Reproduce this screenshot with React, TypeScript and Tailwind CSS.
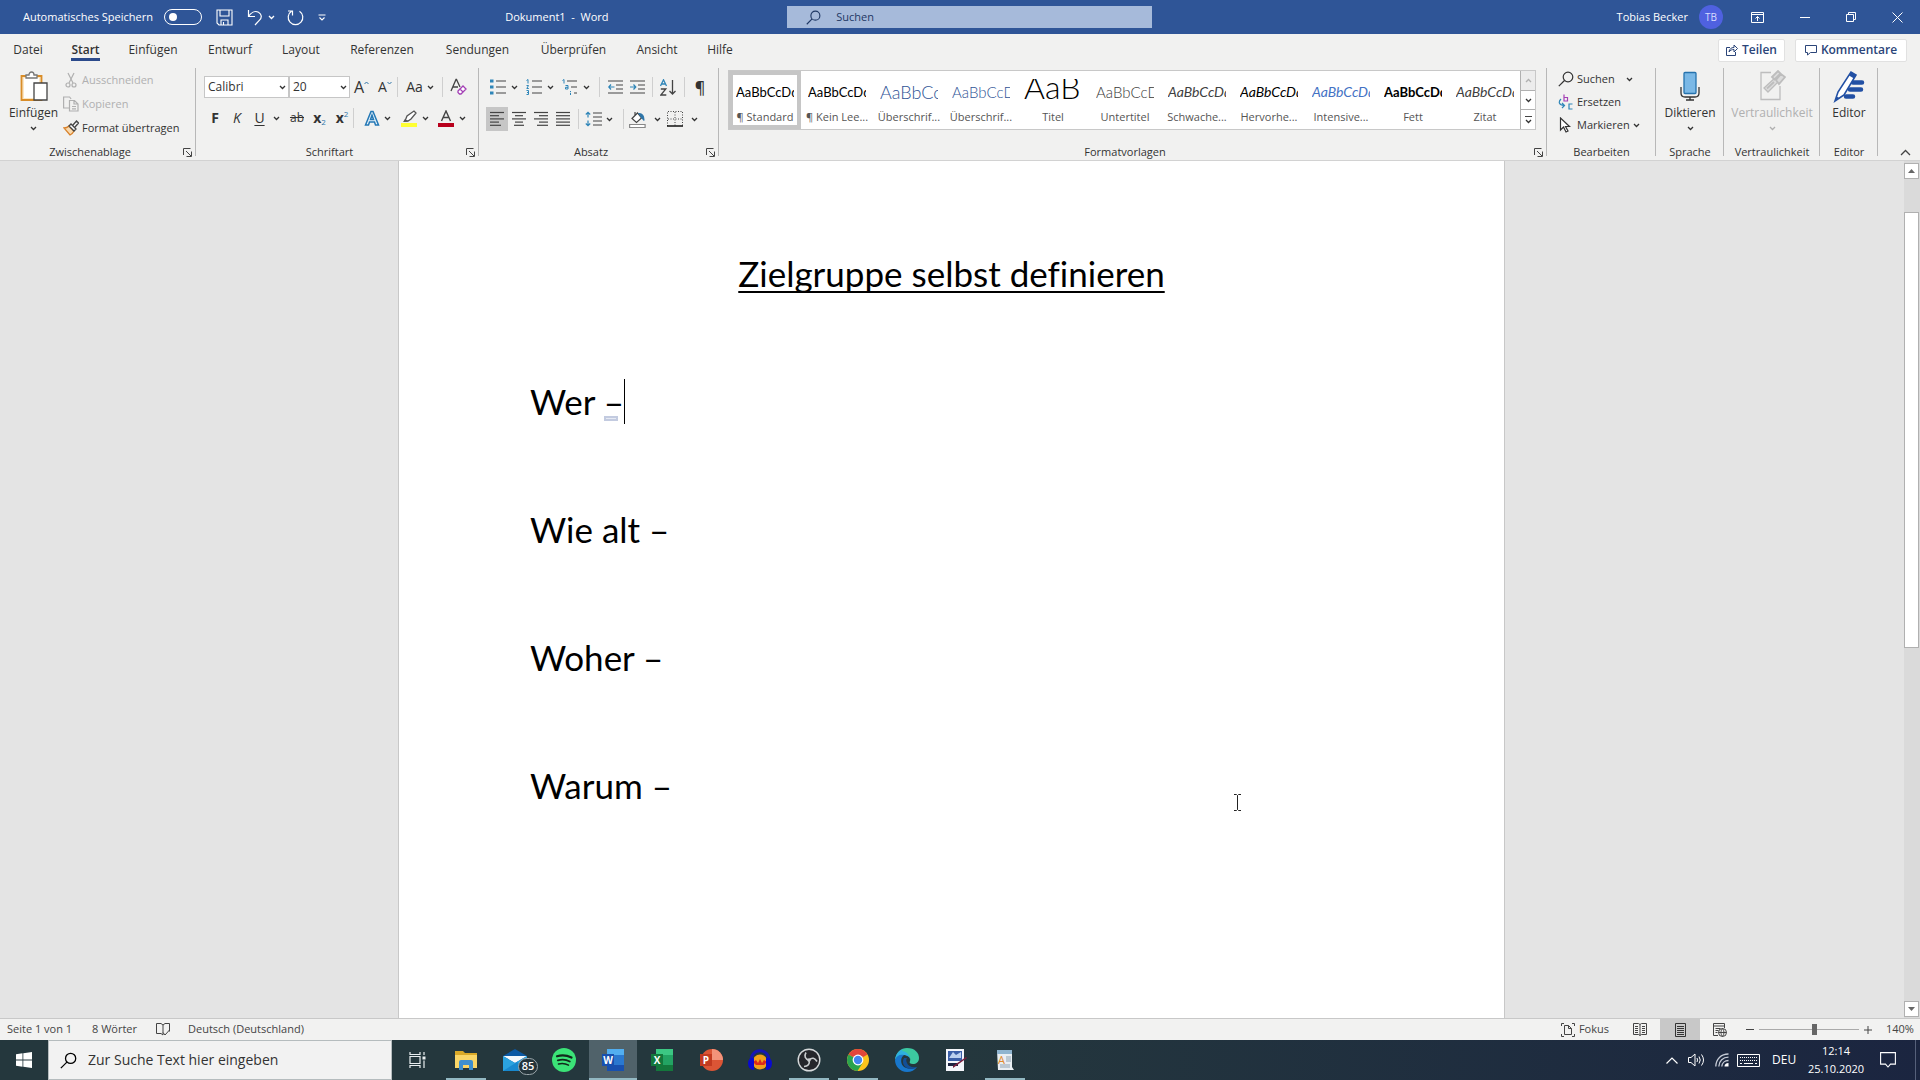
import { useState } from "react";
import type { ReactNode } from "react";
import clsx from "clsx";

interface StyleItem {
  name: string;
  sample: string;
  className: string;
}

const TABS = [
  { label: "Datei", width: "w-14" },
  { label: "Start", width: "w-[59px]" },
  { label: "Einfügen", width: "w-[76px]" },
  { label: "Entwurf", width: "w-[78px]" },
  { label: "Layout", width: "w-[64px]" },
  { label: "Referenzen", width: "w-[98px]" },
  { label: "Sendungen", width: "w-[93px]" },
  { label: "Überprüfen", width: "w-[99px]" },
  { label: "Ansicht", width: "w-[68px]" },
  { label: "Hilfe", width: "w-[58px]" },
];

const STYLES: StyleItem[] = [
  { name: "¶ Standard", sample: "AaBbCcDd", className: "text-[13px]/[26px] text-black" },
  { name: "¶ Kein Lee...", sample: "AaBbCcDd", className: "text-[13px]/[26px] text-black" },
  { name: "Überschrif...", sample: "AaBbCc", className: "text-[18px]/[26px] font-light text-[#2f5496]" },
  { name: "Überschrif...", sample: "AaBbCcD", className: "text-[15px]/[26px] font-light text-[#2f5496]" },
  { name: "Titel", sample: "AaB", className: "text-[32px]/4 font-light text-black" },
  { name: "Untertitel", sample: "AaBbCcD", className: "text-[15px]/[26px] font-light text-[#3a3a3a]" },
  { name: "Schwache...", sample: "AaBbCcDd", className: "text-[14px]/[26px] italic text-[#404040]" },
  { name: "Hervorhe...", sample: "AaBbCcDd", className: "text-[14px]/[26px] italic text-black" },
  { name: "Intensive...", sample: "AaBbCcDd", className: "text-[14px]/[26px] italic text-[#4472c4]" },
  { name: "Fett", sample: "AaBbCcDd", className: "text-[13px]/[26px] font-bold text-black" },
  { name: "Zitat", sample: "AaBbCcDd", className: "text-[14px]/[26px] italic text-[#404040]" },
];

const Chevron = ({ className = "" }: { className?: string }) => (
  <svg width="7" height="5" viewBox="0 0 7 5" fill="none" stroke="currentColor" strokeWidth="1.3" className={clsx("shrink-0", className)}>
    <path d="M1 1l2.5 2.5L6 1" />
  </svg>
);

const Divider = () => <span className="h-5 w-px shrink-0 bg-[#cfcfcf]" />;

const Tool = ({ label, width, children, active }: { label: string; width: string; children: ReactNode; active?: boolean }) => (
  <button
    aria-label={label}
    className={clsx("flex h-6 shrink-0 items-center justify-center", width, active && "bg-[#c6c6c6]")}>
    {children}
  </button>
);

const Launcher = ({ label }: { label: string }) => (
  <button aria-label={label} className="absolute right-1 bottom-[3px]">
    <svg width="9" height="9" viewBox="0 0 9 9" fill="none" stroke="#444" strokeWidth="1">
      <path d="M.5 7V.5H7.5M3 3l5 5M8.5 3.5v5h-5" />
    </svg>
  </button>
);

const Group = ({ title, className, launcher, children }: { title: string; className: string; launcher?: boolean; children: ReactNode }) => (
  <section className={clsx("relative flex h-[94px] shrink-0 flex-col", className)}>
    <div className="flex-1">{children}</div>
    <h2 className={clsx("h-4 text-center text-[11px] leading-4", launcher && "pr-4")}>{title}</h2>
    {launcher && <Launcher label={`${title} Optionen`} />}
    <span className="absolute top-[2px] right-0 h-[88px] w-px bg-[#b8b8b8]" />
  </section>
);

const BigButton = ({ label, chevron, disabled, children }: { label: string; chevron?: boolean; disabled?: boolean; children: ReactNode }) => (
  <button disabled={disabled} className={clsx("flex flex-col items-center pt-1", disabled && "text-[#b0b0b0]")}>
    {children}
    <span className="mt-[2px] text-xs leading-4">{label}</span>
    {chevron && <Chevron className="mt-[5px]" />}
  </button>
);

const Lines = ({ rows }: { rows: number[][] }) => (
  <svg width="16" height="16" viewBox="0 0 16 16" stroke="#444" strokeWidth="1.2">
    {rows.map(([x1, x2], i) => (
      <path key={i} d={`M${x1} ${1.5 + i * 3.2}H${x2}`} />
    ))}
  </svg>
);

const Magnifier = ({ size, className }: { size: number; className?: string }) => (
  <svg width={size} height={size} viewBox="0 0 16 16" fill="none" stroke="currentColor" strokeWidth="1.2" className={className}>
    <circle cx="10" cy="6" r="4.8" />
    <path d="M6.5 9.5L.8 15.2" />
  </svg>
);

const TitleBar = () => {
  const [autoSave, setAutoSave] = useState(false);

  return (
    <header className="grid h-[34px] shrink-0 grid-cols-[41fr_19fr_40fr] items-center bg-[#2f5597] text-[11px] text-white">
      <div className="flex items-center pl-[23px]">
        <label className="flex items-center gap-2">
          <span className="w-[133px] whitespace-nowrap">Automatisches Speichern</span>
          <input
            type="checkbox"
            role="switch"
            checked={autoSave}
            onChange={(e) => setAutoSave(e.target.checked)}
            className="h-4 w-[38px] appearance-none rounded-full border border-white before:ml-1 before:mt-[3px] before:block before:size-2 before:rounded-full before:bg-white checked:before:ml-6"
          />
        </label>
        <button aria-label="Speichern" className="ml-[14px]">
          <svg width="17" height="17" viewBox="0 0 17 17" fill="none" stroke="white" strokeWidth="1.1">
            <path d="M1 1h15v15H3L1 14zM4 1v6h9V1M5 16v-5h7v5M7.5 13v3" />
          </svg>
        </button>
        <button aria-label="Rückgängig" className="ml-[14px]">
          <svg width="16" height="17" viewBox="0 0 16 17" fill="none" stroke="white" strokeWidth="1.2">
            <path d="M1.5 1v6.5H8M1.5 7.5C4 3.500 8 1.500 11.500 3.200c3.500 2 3.500 5.500 1 8L8 16" />
          </svg>
        </button>
        <Chevron className="ml-[5px]" />
        <button aria-label="Wiederholen" className="ml-3">
          <svg width="17" height="18" viewBox="0 0 17 18" fill="none" stroke="white" strokeWidth="1.2">
            <path d="M4.500 3.200a7.300 7.300 0 1 0 8 0M1 3h4.500v4.500" transform="matrix(1 0 0 1 0 0)" />
          </svg>
        </button>
        <button aria-label="Symbolleiste anpassen" className="ml-[14px]">
          <svg width="8" height="7" viewBox="0 0 8 7" fill="none" stroke="white" strokeWidth="1.1">
            <path d="M.5 1h7M1.500 3.500L4 6l2.500-2.500" />
          </svg>
        </button>
        <h1 className="ml-auto w-[282px] whitespace-pre">Dokument1  -  Word</h1>
      </div>
      <label className="flex h-[22px] items-center bg-[#a6bada] text-[#1f3864]">
        <Magnifier size={15} className="ml-[19px] shrink-0" />
        <input
          aria-label="Suchen"
          placeholder="Suchen"
          className="ml-[15px] min-w-0 flex-1 bg-transparent outline-none placeholder:text-[#1f3864]"
        />
      </label>
      <div className="flex items-center justify-end pr-[17px]">
        <span>Tobias Becker</span>
        <span className="ml-[11px] flex size-6 items-center justify-center rounded-full bg-[#4f61e0] text-[10px] text-[#d8dcff]">TB</span>
        <button aria-label="Menüband-Anzeigeoptionen" className="ml-7">
          <svg width="13" height="11" viewBox="0 0 13 11" fill="none" stroke="white">
            <path d="M.5.5h12v10H.5zM.5 2.500h12M6.500 9V4.500M4.500 6.500l2-2 2 2" />
          </svg>
        </button>
        <button aria-label="Minimieren" className="ml-9">
          <svg width="10" height="10" viewBox="0 0 10 10" stroke="white">
            <path d="M0 5.500h10" />
          </svg>
        </button>
        <button aria-label="Verkleinern" className="ml-9">
          <svg width="10" height="10" viewBox="0 0 10 10" fill="none" stroke="white">
            <path d="M.5 2.500h7v7h-7zM2.500 2.500v-2h7v7h-2" />
          </svg>
        </button>
        <button aria-label="Schließen" className="ml-9">
          <svg width="11" height="11" viewBox="0 0 11 11" stroke="white">
            <path d="M.5.5l10 10M10.500.5l-10 10" />
          </svg>
        </button>
      </div>
    </header>
  );
};

const TabRow = () => (
  <nav className="flex h-8 shrink-0 items-center bg-[#f1f1f0] text-xs">
    {TABS.map(({ label, width }) => (
      <button key={label} className={clsx("flex shrink-0 justify-center whitespace-nowrap", width)}>
        {label === "Start" ? (
          <span className="border-b-[3px] border-[#2b4a8b] pt-[3px] font-semibold">{label}</span>
        ) : (
          <span>{label}</span>
        )}
      </button>
    ))}
    <div className="ml-auto flex gap-[10px] pr-[13px] font-semibold text-[#2b4579]">
      <button className="flex h-[23px] w-[67px] items-center justify-center gap-1 rounded-xs border border-[#e1e1e1] bg-white">
        <svg width="12" height="12" viewBox="0 0 12 12" fill="none" stroke="currentColor">
          <path d="M4 3.500H.5v8h9V8M3 8c.5-3 2-4.500 5-4.500V1l3.500 3.500L8 8V5.500C6 5.500 4.500 6 3 8z" />
        </svg>
        Teilen
      </button>
      <button className="flex h-[23px] w-28 items-center justify-center gap-1 rounded-xs border border-[#e1e1e1] bg-white">
        <svg width="12" height="11" viewBox="0 0 12 11" fill="none" stroke="currentColor">
          <path d="M.5.5h11v7h-6l-3 2.500V7.500h-2z" />
        </svg>
        Kommentare
      </button>
    </div>
  </nav>
);

const ClipboardGroup = () => (
  <Group title="Zwischenablage" className="w-[196px]" launcher>
    <div className="flex">
      <div className="flex w-[63px] justify-center pl-1">
        <BigButton label="Einfügen" chevron>
          <svg width="30" height="33" viewBox="0 0 30 33" fill="none">
            <path d="M3.500 6h20v24h-20z" fill="#fbe7c6" stroke="#d98d28" strokeWidth="1.800" />
            <path d="M6 8h15v20H6z" fill="#fff" />
            <path d="M8 8V5h3c0-4 5-4 5 0h3v3z" fill="#fff" stroke="#777" strokeWidth="1.300" />
            <path d="M16 13h13v17H16z" fill="#fff" stroke="#444" strokeWidth="1.300" />
          </svg>
        </BigButton>
      </div>
      <div className="flex flex-col gap-1 pt-1 text-[11px]">
        <button disabled className="flex h-5 items-center gap-[3px] text-[#b0b0b0]">
          <svg width="16" height="16" viewBox="0 0 16 16" fill="none" stroke="currentColor" strokeWidth="1.200">
            <path d="M5 1l5 10M11 1L6 11" />
            <circle cx="5" cy="13" r="2" />
            <circle cx="11" cy="13" r="2" />
          </svg>
          Ausschneiden
        </button>
        <button disabled className="flex h-5 items-center gap-[3px] text-[#b0b0b0]">
          <svg width="16" height="16" viewBox="0 0 16 16" fill="none" stroke="currentColor" strokeWidth="1.200">
            <path d="M6 12H.6V1h6l1.500 2M6.500 4.500h5l3.500 3.500v7H6.500zM11 4.500V8h4M9 10.500h4M9 12.800h4" />
          </svg>
          Kopieren
        </button>
        <button className="flex h-5 items-center gap-[3px]">
          <svg width="16" height="16" viewBox="0 0 16 16" fill="none">
            <path d="M1 8c3 0 4-1 5-2l5 5c-1 2-2 3-4 4z" fill="#f8d9ae" stroke="#d9822b" strokeWidth="1.300" />
            <path d="M6 6l2-2 5 5-2 2zM10 5l3.500-4 2 2L12 7" fill="#fff" stroke="#444" strokeWidth="1.300" />
          </svg>
          Format übertragen
        </button>
      </div>
    </div>
  </Group>
);

const FontGroup = () => (
  <Group title="Schriftart" className="w-[283px]" launcher>
    <div className="flex flex-col gap-2 pl-2 pt-[10px]">
      <div className="flex h-[22px] items-center text-xs">
        <div className="relative">
          <select aria-label="Schriftart" className="h-[22px] w-[85px] appearance-none border border-[#c6c6c6] bg-white px-[3px]">
            <option>Calibri</option>
          </select>
          <Chevron className="pointer-events-none absolute top-[9px] right-[3px]" />
        </div>
        <div className="relative">
          <select aria-label="Schriftgrad" className="h-[22px] w-[61px] appearance-none border border-[#c6c6c6] bg-white px-[3px]">
            <option>20</option>
          </select>
          <Chevron className="pointer-events-none absolute top-[9px] right-[3px]" />
        </div>
        <Tool label="Schriftgrad vergrößern" width="w-[23px]">
          <span className="text-base leading-5">A</span>
          <svg width="5" height="4" viewBox="0 0 5 4" fill="none" stroke="#2e75a8" className="mb-2">
            <path d="M.5 3L2.500 1l2 2" />
          </svg>
        </Tool>
        <Tool label="Schriftgrad verkleinern" width="w-6">
          <span className="text-sm leading-5">A</span>
          <svg width="5" height="4" viewBox="0 0 5 4" fill="none" stroke="#2e75a8" className="mb-2">
            <path d="M.5 1l2 2 2-2" />
          </svg>
        </Tool>
        <Divider />
        <Tool label="Groß-/Kleinschreibung" width="w-[44px]">
          <span className="mr-1 text-sm">Aa</span>
          <Chevron />
        </Tool>
        <Divider />
        <Tool label="Formatierung löschen" width="w-[30px]">
          <svg width="17" height="18" viewBox="0 0 17 18" fill="none">
            <path d="M1 13L6 1.500h.5L10 9M3 9h5" stroke="#444" strokeWidth="1.300" />
            <path d="M8 13l5-5 3 3-5 5H9.500L8 14.500zM10 11l3 3" fill="#fff" stroke="#a33fb5" strokeWidth="1.300" />
          </svg>
        </Tool>
      </div>
      <div className="flex h-6 items-center text-sm">
        <Tool label="Fett" width="w-[22px]"><b>F</b></Tool>
        <Tool label="Kursiv" width="w-[22px]"><i>K</i></Tool>
        <Tool label="Unterstrichen" width="w-[38px]">
          <u className="mr-2 underline-offset-2">U</u>
          <Chevron />
        </Tool>
        <Tool label="Durchgestrichen" width="w-[22px]"><s className="text-xs">ab</s></Tool>
        <Tool label="Tiefgestellt" width="w-[23px]">
          <b>x</b><span className="mt-2 text-[8px] text-[#2e75a8]">2</span>
        </Tool>
        <Tool label="Hochgestellt" width="w-[22px]">
          <b>x</b><span className="mb-2 text-[8px] text-[#2e75a8]">2</span>
        </Tool>
        <Divider />
        <span className="w-1" />
        <Tool label="Texteffekte" width="w-[38px]">
          <svg width="16" height="16" viewBox="0 0 16 16" className="mr-1">
            <path d="M1.500 15L7 1.500h2L14.500 15h-3l-1-3h-5l-1 3zM6.500 9.500h3L8 5z" fill="#e8f3fb" stroke="#2478b5" strokeWidth="1.500" />
          </svg>
          <Chevron />
        </Tool>
        <Tool label="Texthervorhebung" width="w-[38px]">
          <svg width="17" height="17" viewBox="0 0 17 17" fill="none" className="mr-1">
            <path d="M0 13h16v4H0z" fill="#ffff32" />
            <path d="M4 11l2-5 7-5 2 2-5 6-3 2z" fill="#fff" stroke="#555" strokeWidth="1.300" />
            <path d="M2 12l2-3 3 2.500z" fill="#555" />
          </svg>
          <Chevron />
        </Tool>
        <Tool label="Schriftfarbe" width="w-[36px]">
          <svg width="17" height="17" viewBox="0 0 17 17" fill="none" className="mr-1">
            <path d="M0 13h16v4H0z" fill="#b8001c" />
            <path d="M3.500 11L8 1l4.500 10M5 7.500h6" stroke="#444" strokeWidth="1.400" />
          </svg>
          <Chevron />
        </Tool>
      </div>
    </div>
  </Group>
);

const ListIcon = ({ kind }: { kind: "bullet" | "number" | "multi" }) => (
  <svg width="16" height="16" viewBox="0 0 16 16" stroke="#444" strokeWidth="1.200" fill="none">
    {kind === "multi" ? (
      <path d="M5 2h10M9 8h6M12 14h3" />
    ) : (
      <path d="M6 2h10M6 8h10M6 14h10" />
    )}
    {kind === "bullet" && <path d="M0 2h3.500M0 8h3.500M0 14h3.500" stroke="#2e85b8" strokeWidth="3" />}
    {kind === "number" && <path d="M.5 1.500L2 .5v4M.5 6.500h2L.8 9.500h2M.5 11.500h2v4H.5M1 13.500h1.500" stroke="#2e85b8" strokeWidth="1" />}
    {kind === "multi" && <path d="M.5 1.500L2 .5v4M3.500 6.500h2.500v3.500H3.500V8.300H6M8.500 12v1M8.500 13.800V16" stroke="#2e85b8" strokeWidth="1" />}
  </svg>
);

const ParagraphGroup = () => (
  <Group title="Absatz" className="w-[240px]" launcher>
    <div className="flex flex-col gap-2 pl-[7px] pt-[9px]">
      <div className="flex h-6 items-center">
        {(["bullet", "number", "multi"] as const).map((kind) => (
          <Tool key={kind} label={kind === "bullet" ? "Aufzählung" : kind === "number" ? "Nummerierung" : "Liste"} width="w-9">
            <ListIcon kind={kind} />
            <Chevron className="ml-[5px]" />
          </Tool>
        ))}
        <span className="w-[5px]" />
        <Divider />
        <span className="w-1" />
        <Tool label="Einzug verkleinern" width="w-[22px]">
          <svg width="15" height="14" viewBox="0 0 15 14" fill="none" stroke="#444" strokeWidth="1.200">
            <path d="M0 1h15M8 5h7M8 9h7M0 13h15" />
            <path d="M6.500 7H1M3 4.500L.8 7 3 9.500" stroke="#2e85b8" />
          </svg>
        </Tool>
        <Tool label="Einzug vergrößern" width="w-[22px]">
          <svg width="15" height="14" viewBox="0 0 15 14" fill="none" stroke="#444" strokeWidth="1.200">
            <path d="M0 1h15M8 5h7M8 9h7M0 13h15" />
            <path d="M0 7h5.500M3.500 4.500L5.800 7 3.500 9.500" stroke="#2e85b8" />
          </svg>
        </Tool>
        <span className="w-1" />
        <Divider />
        <Tool label="Sortieren" width="w-[31px]">
          <svg width="17" height="17" viewBox="0 0 17 17" fill="none" strokeWidth="1.300">
            <path d="M.5 7L3.500.8 6.500 7M1.500 5h4" stroke="#2e85b8" />
            <path d="M.8 10h5L.8 16h5.500M12.500 1v14M9.500 12l3 3 3-3" stroke="#444" />
          </svg>
        </Tool>
        <Divider />
        <Tool label="Absatzmarken anzeigen" width="w-[30px]">
          <span className="text-base font-semibold">¶</span>
        </Tool>
      </div>
      <div className="flex h-6 items-center">
        <Tool label="Linksbündig" width="w-[22px]" active>
          <Lines rows={[[1, 15], [1, 10], [1, 15], [1, 10], [1, 12]]} />
        </Tool>
        <Tool label="Zentriert" width="w-[22px]">
          <Lines rows={[[1, 15], [4, 12], [1, 15], [4, 12], [3, 13]]} />
        </Tool>
        <Tool label="Rechtsbündig" width="w-[22px]">
          <Lines rows={[[1, 15], [6, 15], [1, 15], [6, 15], [4, 15]]} />
        </Tool>
        <Tool label="Blocksatz" width="w-[22px]">
          <Lines rows={[[1, 15], [1, 15], [1, 15], [1, 15], [1, 15]]} />
        </Tool>
        <span className="w-1" />
        <Divider />
        <Tool label="Zeilenabstand" width="w-[40px]">
          <svg width="17" height="16" viewBox="0 0 17 16" fill="none" stroke="#444" strokeWidth="1.200" className="mr-1">
            <path d="M8 2h9M8 6h9M8 10h9M8 14h9" />
            <path d="M3 1.500v5M3 9.500v5M.8 3.500L3 1.300l2.200 2.200M.8 12.500L3 14.700l2.200-2.200" stroke="#2e85b8" />
          </svg>
          <Chevron />
        </Tool>
        <span className="w-1" />
        <Divider />
        <Tool label="Schattierung" width="w-[42px]">
          <svg width="17" height="17" viewBox="0 0 17 17" fill="none" stroke="#444" strokeWidth="1.200" className="mr-2">
            <path d="M.6 13.500h15.500v3H.6z" stroke="#888" fill="#fff" />
            <path d="M3 7.500L8.500 2l4 5-5 4.500zM6 4V1" fill="#fff" />
            <path d="M10 2.500c4 0 5 3 5 7-1-2-2-2-2.500-3z" fill="#2e75a8" stroke="#2e75a8" />
          </svg>
          <Chevron />
        </Tool>
        <Tool label="Rahmen" width="w-[32px]">
          <svg width="16" height="16" viewBox="0 0 16 16" fill="none" stroke="#444" className="mr-2">
            <path d="M.5 15V.5h15V15M8 1v14M1 8h14" strokeDasharray="1 1.500" />
            <path d="M0 15h16" stroke="#111" strokeWidth="1.500" />
          </svg>
          <Chevron />
        </Tool>
      </div>
    </div>
  </Group>
);

const StylesGroup = () => (
  <Group title="Formatvorlagen" className="min-w-0 flex-1" launcher>
    <div className="ml-[9px] mr-[11px] mt-1 flex h-[60px] border border-[#c8c8c8] bg-white">
      <div className="flex min-w-0 flex-1 overflow-hidden">
        {STYLES.map(({ name, sample, className }, i) => (
          <button
            key={i}
            className={clsx(
              "flex w-[72px] shrink-0 flex-col items-center border-4 pt-1",
              i === 0 ? "border-[#c6c6c6]" : "border-transparent"
            )}>
            <span
              className={clsx(
                "block h-[26px] w-[58px] overflow-hidden text-left whitespace-nowrap font-[Lato,'Liberation_Sans',sans-serif]",
                className
              )}>
              {sample}
            </span>
            <span className="mt-1 text-[11px] leading-4 whitespace-nowrap text-[#555]">{name}</span>
          </button>
        ))}
      </div>
      <div className="flex w-[15px] shrink-0 flex-col divide-y divide-[#b0b0b0] border-l border-[#b0b0b0]">
        <button aria-label="Nach oben" disabled className="flex flex-1 items-center justify-center bg-[#ececec] text-[#b0b0b0]">
          <Chevron className="rotate-180" />
        </button>
        <button aria-label="Nach unten" className="flex flex-1 items-center justify-center">
          <Chevron />
        </button>
        <button aria-label="Weitere" className="flex flex-1 flex-col items-center justify-center gap-[2px]">
          <span className="h-px w-[7px] bg-[#444]" />
          <Chevron />
        </button>
      </div>
    </div>
  </Group>
);

const EditGroup = () => (
  <Group title="Bearbeiten" className="w-[109px]">
    <div className="flex flex-col gap-[3px] pl-[11px] pt-[3px] text-[11px]">
      <button className="flex h-5 items-center gap-[3px]">
        <Magnifier size={16} />
        Suchen
        <Chevron className="ml-2" />
      </button>
      <button className="flex h-5 items-center gap-[3px]">
        <svg width="16" height="16" viewBox="0 0 16 16" fill="none" strokeWidth="1.200">
          <path d="M6 .5V7h3.500V3.500H6" stroke="#a33fb5" />
          <path d="M14.500 10H11v5h3.500M3 5C0 8 1 11 6 11.500M4 9l2.500 2.500L4 14" stroke="#2e85b8" />
        </svg>
        Ersetzen
      </button>
      <button className="flex h-5 items-center gap-[3px]">
        <svg width="16" height="16" viewBox="0 0 16 16" fill="#fff" stroke="#333" strokeWidth="1.200">
          <path d="M2.500 1v12l3-3 2.500 5 2-1-2.500-4.500h4z" />
        </svg>
        Markieren
        <Chevron />
      </button>
    </div>
  </Group>
);

const Ribbon = () => (
  <div className="flex shrink-0 border-b border-[#d2d2d2] bg-[#f1f1f0] whitespace-nowrap">
    <ClipboardGroup />
    <FontGroup />
    <ParagraphGroup />
    <StylesGroup />
    <EditGroup />
    <Group title="Sprache" className="w-[68px]">
      <div className="flex justify-center">
        <BigButton label="Diktieren" chevron>
          <svg width="20" height="33" viewBox="0 0 20 33" fill="none" stroke="#333" strokeWidth="1.300">
            <rect x="4" y="2.500" width="12" height="21" rx="1" fill="#7ab8e6" stroke="#2673ae" />
            <path d="M1 17v6q0 4 4 4h10q4 0 4-4v-6M10 27v3M6 30h8" />
          </svg>
        </BigButton>
      </div>
    </Group>
    <Group title="Vertraulichkeit" className="w-24">
      <div className="flex justify-center">
        <BigButton label="Vertraulichkeit" chevron disabled>
          <svg width="28" height="33" viewBox="0 0 28 33" fill="none" stroke="#bdbdbd" strokeWidth="1.300">
            <path d="M13 2.500H3v27h19V16" />
            <path d="M6 18L17 8l3.500 3.500L10 22z" fill="#dcdcdc" />
            <path d="M9 18.500l7-6.500M14 7l6-6 2.500 2.500-6 6zM18 10l5-6 4 3-6 7z" fill="#dcdcdc" strokeWidth="1.800" />
          </svg>
        </BigButton>
      </div>
    </Group>
    <Group title="Editor" className="w-[58px]">
      <div className="flex justify-center">
        <BigButton label="Editor">
          <svg width="32" height="33" viewBox="0 0 32 33" fill="none">
            <path d="M20 12.500h9M17 19.500h11M13 26.500h7" stroke="#2250a4" strokeWidth="4.500" strokeLinecap="round" />
            <path d="M2 31l3-9L18 2l5 3-12 20z" fill="#fff" stroke="#2250a4" strokeWidth="1.600" />
            <path d="M18 2l5 3-2 3.500-5-3zM2 31l1.500-4.500 3 1.500z" fill="#2250a4" />
          </svg>
        </BigButton>
      </div>
    </Group>
    <div className="flex w-[42px] items-end justify-center pb-1 pl-3">
      <button aria-label="Menüband reduzieren">
        <svg width="11" height="7" viewBox="0 0 11 7" fill="none" stroke="#444" strokeWidth="1.300">
          <path d="M1 6l4.500-4.500L10 6" />
        </svg>
      </button>
    </div>
  </div>
);

const Document = () => (
  <main className="flex min-h-0 flex-1 bg-[#e4e4e4]">
    <div className="relative flex flex-1 justify-center overflow-hidden pr-px">
      <article className="w-[1107px] border-x border-[#c8c8c8] bg-white px-[131px] pt-20 font-[Lato,'Liberation_Sans',sans-serif] text-[35px] leading-[64px] text-black">
        <h2 className="mb-16 text-center underline decoration-2 underline-offset-4 [font-variant-ligatures:none] [text-decoration-skip-ink:none]">
          Zielgruppe selbst definieren
        </h2>
        <p className="mb-16 flex items-center">
          <span className="whitespace-pre">Wer </span>
          <span className="relative">
            –
            <span className="absolute bottom-3 left-0 h-[5px] w-[14px] border-2 border-[#c3cbe0] bg-[#e6eaf4]" />
          </span>
          <span className="h-[45px] w-px bg-black" />
        </p>
        <p className="mb-16">Wie alt –</p>
        <p className="mb-16">Woher –</p>
        <p>Warum –</p>
      </article>
      {/* text pointer */}
      <svg width="9" height="17" viewBox="0 0 9 17" fill="none" stroke="#222" className="absolute top-[633px] left-[1233px]">
        <path d="M1 .5h2.500l1 1 1-1H8M4.500 1.500v14M1 16.500h2.500l1-1 1 1H8" />
      </svg>
    </div>
    <div className="flex w-4 shrink-0 flex-col bg-[#dadada] pt-[2px] pb-[1px]">
      <button aria-label="Nach oben scrollen" className="flex h-4 w-[15px] items-center justify-center border border-[#b0b0b0] bg-white">
        <svg width="7" height="4" viewBox="0 0 7 4" fill="#666"><path d="M0 4L3.500 0 7 4z" /></svg>
      </button>
      <div className="flex min-h-0 flex-1 flex-col">
        <div className="h-[4%]" />
        <div className="h-[53%] w-[15px] border border-[#b0b0b0] bg-white" />
      </div>
      <button aria-label="Nach unten scrollen" className="flex h-4 w-[15px] items-center justify-center border border-[#b0b0b0] bg-white">
        <svg width="7" height="4" viewBox="0 0 7 4" fill="#666"><path d="M0 0L3.500 4 7 0z" /></svg>
      </button>
    </div>
  </main>
);

const StatusBar = () => (
  <footer className="flex h-[22px] shrink-0 items-center border-t border-[#c8c8c8] bg-[#f2f2f1] pl-[7px] text-[11px] whitespace-nowrap text-[#444]">
    <span className="w-[85px]">Seite 1 von 1</span>
    <span className="w-16">8 Wörter</span>
    <svg width="14" height="13" viewBox="0 0 14 13" fill="none" stroke="#444">
      <path d="M7 2L5 .5H.5v10H5l2 1.500M7 2L9 .5h4.500v8M7 2v10M7 9.500L9 12l4.500-5" />
    </svg>
    <span className="ml-[18px]">Deutsch (Deutschland)</span>
    <button className="ml-auto flex items-center gap-1">
      <svg width="14" height="14" viewBox="0 0 14 14" fill="none" stroke="#444">
        <path d="M.5 3V.5H3M11 .5h2.500V3M.5 11v2.500H3M11 13.500h2.500V11M3.500 2.500h4l3 3v6h-7zM7.500 2.500v3h3" />
      </svg>
      Fokus
    </button>
    <button aria-label="Lesemodus" className="ml-6">
      <svg width="14" height="13" viewBox="0 0 14 13" fill="none" stroke="#444">
        <path d="M7 1.500L5.500.5h-5v11h5L7 12.500l1.500-1h5V.5h-5zM7 1.500v11M2 3.500h3M2 5.500h3M2 7.500h3M2 9.500h3M9 3.500h3M9 5.500h3M9 7.500h3M9 9.500h3" />
      </svg>
    </button>
    <button aria-label="Seitenlayout" className="ml-[13px] flex h-[22px] w-10 items-center justify-center bg-[#c8c8c8]">
      <svg width="11" height="14" viewBox="0 0 11 14" fill="none" stroke="#333">
        <path d="M.5.5h10v13H.5zM2 3.500h7M2 5.500h7M2 7.500h7M2 9.500h7M2 11.500h7" />
      </svg>
    </button>
    <button aria-label="Weblayout" className="ml-[13px]">
      <svg width="14" height="14" viewBox="0 0 14 14" fill="none" stroke="#444">
        <path d="M5 12.500H.5V.5h11V5M.5 3h11M2.500 5.500h5M2.500 7.500h3M2.500 9.500h2" />
        <circle cx="9.500" cy="9.500" r="4" />
        <path d="M5.500 9.500h8M9.500 5.500c-2 2.500-2 5.500 0 8 2-2.500 2-5.500 0-8" />
      </svg>
    </button>
    <button aria-label="Verkleinern" className="ml-[19px] h-px w-2 bg-[#444]" />
    <input
      type="range"
      aria-label="Zoom"
      min={10}
      max={500}
      defaultValue={285}
      className="mx-[5px] h-3 w-[100px] appearance-none bg-[linear-gradient(#aaa,#aaa)] bg-[length:100%_1px] bg-center bg-no-repeat [&::-webkit-slider-thumb]:h-[11px] [&::-webkit-slider-thumb]:w-[5px] [&::-webkit-slider-thumb]:appearance-none [&::-webkit-slider-thumb]:bg-[#666]"
    />
    <button aria-label="Vergrößern">
      <svg width="8" height="8" viewBox="0 0 8 8" stroke="#444"><path d="M0 4h8M4 0v8" /></svg>
    </button>
    <span className="ml-[14px] w-[34px]">140%</span>
  </footer>
);

const Office = ({ letter, dark, mid, light, round }: { letter: string; dark: string; mid: string; light: string; round?: boolean }) => (
  <span className="relative block">
    <svg width="24" height="24" viewBox="0 0 24 24">
      {round ? (
        <>
          <circle cx="13" cy="12" r="11" fill={mid} />
          <path d="M13 1a11 11 0 0 1 11 11H13z" fill={light} />
        </>
      ) : (
        <>
          <path d="M6 1h17v22H6z" fill={mid} />
          <path d="M6 1h17v6H6z" fill={light} />
          <path d="M6 17h17v6H6z" fill={dark} />
        </>
      )}
      <path d="M1 6h12v12H1z" fill={dark} />
    </svg>
    <span className="absolute top-[6px] left-[1px] w-3 text-center text-[10px] leading-3 font-bold text-white">{letter}</span>
  </span>
);

const APPS: { name: string; icon: ReactNode; open?: boolean; active?: boolean }[] = [
  {
    name: "Aktive Anwendungen",
    icon: (
      <svg width="17" height="16" viewBox="0 0 17 16" fill="none" stroke="#e8eef0" strokeWidth="1.200">
        <path d="M1 4.500h10v7H1zM1 0v2.500h10V0M1 16v-2.500h10V16M15 0v3M15 8.500V16" />
        <path d="M13.500 4.500h3v3h-3z" fill="#e8eef0" stroke="none" />
      </svg>
    ),
  },
  {
    name: "Explorer",
    open: true,
    icon: (
      <svg width="22" height="20" viewBox="0 0 22 20">
        <path d="M0 1h8l2 2h12v15H0z" fill="#dba928" />
        <path d="M0 5h22v13H0z" fill="#fbd667" />
        <path d="M4 20v-8q0-2 2-2h10q2 0 2 2v8h-4v-5H8v5z" fill="#3d8fd0" />
      </svg>
    ),
  },
  {
    name: "Mail",
    icon: (
      <span className="relative block">
        <svg width="24" height="22" viewBox="0 0 24 22">
          <path d="M0 7L12 0l12 7v15H0z" fill="#0c59a4" />
          <path d="M0 7h24L12 14z" fill="#f5f8fb" />
          <path d="M0 7l12 7 12-7v15H0z" fill="#2ba3e0" />
          <path d="M0 22l14-9 10 9z" fill="#1889cf" />
        </svg>
        <span className="absolute top-[9px] left-[15px] flex h-[17px] w-5 items-center justify-center rounded-full border border-[#9aa6aa] bg-[#24343a] text-[11px] font-semibold text-white">
          85
        </span>
      </span>
    ),
  },
  {
    name: "Spotify",
    icon: (
      <svg width="24" height="24" viewBox="0 0 24 24" fill="none" stroke="#12291c" strokeLinecap="round">
        <circle cx="12" cy="12" r="12" fill="#3be377" stroke="none" />
        <path d="M5 8.300c5-1.500 10-1 14.500 1.300" strokeWidth="2.200" />
        <path d="M5.800 12.300c4-1.200 8.500-.8 12 1.200" strokeWidth="1.800" />
        <path d="M6.500 16c3.500-.9 7-.5 10 1.200" strokeWidth="1.500" />
      </svg>
    ),
  },
  { name: "Word", open: true, active: true, icon: <Office letter="W" dark="#1850ae" mid="#2a78cf" light="#52aef0" /> },
  { name: "Excel", icon: <Office letter="X" dark="#14773c" mid="#23a363" light="#3cc783" /> },
  { name: "PowerPoint", icon: <Office letter="P" dark="#c23a20" mid="#db5535" light="#f3937a" round /> },
  {
    name: "Audacity",
    icon: (
      <svg width="24" height="24" viewBox="0 0 24 24" fill="none">
        <circle cx="12" cy="14" r="7.500" fill="#f2a01c" />
        <path d="M5 14l3-2 2 3 2-4 2 4 2-3 3 2-3 3H8z" fill="#dd2a1b" />
        <path d="M3 14C2-1 22-1 21 14" stroke="#1616b4" strokeWidth="3" />
        <path d="M0 15q0-5 6-5v12q-6 0-6-7zM24 15q0-5-6-5v12q6 0 6-7z" fill="#0a0ad0" />
      </svg>
    ),
  },
  {
    name: "OBS Studio",
    open: true,
    icon: (
      <svg width="24" height="24" viewBox="0 0 24 24" fill="none">
        <circle cx="12" cy="12" r="10.800" fill="#25262b" stroke="#d5d8da" strokeWidth="1.400" />
        <path d="M12 12C8 11 7 8 9 4.500M12 12c3-3 6-2 8 1.500M12 12c1 4-1 6.500-5 6.500" stroke="#c9ccce" strokeWidth="1.600" />
        <circle cx="12" cy="12" r="1.800" fill="#c9ccce" />
      </svg>
    ),
  },
  {
    name: "Chrome",
    open: true,
    icon: (
      <svg width="24" height="24" viewBox="0 0 24 24">
        <circle cx="12" cy="12" r="11" fill="#fbc31c" />
        <path d="M12 12L2.500 6.500a11 11 0 0 1 19 0z" fill="#e2463a" />
        <path d="M12 12L2.500 6.500A11 11 0 0 0 11.500 23l5-8z" fill="#2aa34e" />
        <circle cx="12" cy="12" r="5.400" fill="#fff" />
        <circle cx="12" cy="12" r="4.200" fill="#4285f0" />
      </svg>
    ),
  },
  {
    name: "Edge",
    icon: (
      <svg width="24" height="24" viewBox="0 0 24 24">
        <path d="M0 12C1 4 6 0 12 0c8 0 12 5 12 10 0 4-3 6-6 6-3 0-4-1-3-3 1-3-1-6-5-6S1 9 0 12z" fill="#3cc8a0" />
        <path d="M0 12C1 5 5 1 10 1c-2 0-3 1-3 2 4 0 8 4 8 8-1-3-4-4-6-4-4 0-8 2-9 5z" fill="#2fb0df" />
        <path d="M0 12c1-4 5-6 9-5-3 2-4 7-1 11 3 3 9 4 14 1-2 3-6 5-10 5C5 24 0 18 0 12z" fill="#1877cc" />
        <path d="M9 10c-3 5 1 11 7 11 3 0 5-1 6-2-5 1-9-1-10-4-1-2-1-4 0-5z" fill="#124f98" />
      </svg>
    ),
  },
  {
    name: "Journal",
    icon: (
      <svg width="22" height="24" viewBox="0 0 22 24">
        <path d="M1 1h18v22H1z" fill="#f4f6fb" />
        <path d="M3 3h14v10H3z" fill="#3b5fa8" />
        <path d="M4 10l4-6 3 3 5-3v6z" fill="#bcd0ee" />
        <path d="M3 15h10v3H3z" fill="#1c2340" />
        <path d="M8 20L22 10l-1-1L8 18z" fill="#7a1f3d" />
      </svg>
    ),
  },
  {
    name: "WordPad",
    open: true,
    icon: (
      <span className="relative block">
        <svg width="20" height="22" viewBox="0 0 20 22">
          <path d="M2 1h15v17l2 3H3z" fill="#e9eef2" />
          <path d="M2 1h15v4H2z" fill="#8fb4cf" />
          <path d="M11 8h5M11 10h5M11 12h5M5 16h10M5 18h10" stroke="#8fa3b3" />
        </svg>
        <span className="absolute top-[5px] left-[3px] text-[11px] leading-3 text-[#e08a2b]">A</span>
      </span>
    ),
  },
];

const Taskbar = () => (
  <nav className="flex h-10 shrink-0 items-center bg-linear-to-r from-[#24373d] from-50% to-[#1b2540] text-xs whitespace-nowrap text-white">
    <button aria-label="Start" className="flex w-12 justify-center">
      <svg width="16" height="16" viewBox="0 0 16 16" fill="white">
        <path d="M0 2.200l6.500-.9v6.200H0zM7.300 1.200L16 0v7.500H7.300zM0 8.400h6.500v6.300L0 13.800zM7.300 8.400H16V16l-8.700-1.200z" />
      </svg>
    </button>
    <label className="flex h-10 w-[344px] items-center border border-[#b5bcbe] bg-[#f2f2f2] text-black">
      <Magnifier size={17} className="ml-[11px]" />
      <input
        aria-label="Suche"
        placeholder="Zur Suche Text hier eingeben"
        className="ml-[11px] flex-1 bg-transparent text-sm outline-none placeholder:text-[#333]"
      />
    </label>
    <div className="ml-px flex gap-px">
      {APPS.map(({ name, icon, open, active }) => (
        <button
          key={name}
          aria-label={name}
          className={clsx("relative flex h-10 w-12 items-center justify-center", active && "bg-[#50626a]")}>
          {icon}
          {open && <span className={clsx("absolute bottom-0 h-[2px] bg-[#93b8c2]", active ? "w-12" : "w-10")} />}
        </button>
      ))}
    </div>
    <div className="ml-auto flex items-center">
      <svg width="12" height="7" viewBox="0 0 12 7" fill="none" stroke="white" strokeWidth="1.200">
        <path d="M.5 6.500L6 1l5.500 5.500" />
      </svg>
      <svg width="17" height="14" viewBox="0 0 17 14" fill="none" stroke="white" className="ml-[10px]">
        <path d="M.5 4.500H3L7 1v12L3 9.500H.5zM9 5q1 2 0 4M11 3.500q2.500 3.500 0 7M13.500 1.500q4 5.500 0 11" />
      </svg>
      <svg width="14" height="14" viewBox="0 0 14 14" fill="none" stroke="#c5cbd6" className="ml-[10px]">
        <path d="M.8 13.500C1 6 6 1 13.500 1M3.800 13.500C4 8 8 4.200 13.500 4.200M6.800 13.500c.2-3.500 3-6 6.700-6" strokeWidth="1.300" />
        <path d="M9.500 13.500c0-2 1.500-3.500 4-3.500v3.500z" fill="white" stroke="none" />
      </svg>
      <svg width="23" height="13" viewBox="0 0 23 13" fill="none" stroke="white" className="ml-2">
        <path d="M.5.500h22v12H.5z" />
        <path d="M3 3.500h17M3 6.500h17" strokeDasharray="1 1" />
        <path d="M3 9.500h2M7 9.500h9M18 9.500h2" />
      </svg>
      <span className="ml-3 w-[22px]">DEU</span>
      <time className="ml-[10px] w-[64px] text-center text-[11px] leading-[18px]">
        12:14
        <br />
        25.10.2020
      </time>
      <svg width="16" height="16" viewBox="0 0 16 16" fill="none" stroke="white" strokeWidth="1.100" className="ml-3">
        <path d="M.6.6h14.800v11.500H10.500L8 15l-2.500-2.900H.6z" />
      </svg>
      <span className="mr-1 ml-[19px] h-10 w-px bg-[#56607a]" />
    </div>
  </nav>
);

const App = () => {
  return (
    <div className="flex h-screen flex-col overflow-hidden bg-[#f1f1f0] font-['Open_Sans','Noto_Sans',sans-serif] text-[#333]">
      <TitleBar />
      <TabRow />
      <Ribbon />
      <Document />
      <StatusBar />
      <Taskbar />
    </div>
  );
};

export default App;
